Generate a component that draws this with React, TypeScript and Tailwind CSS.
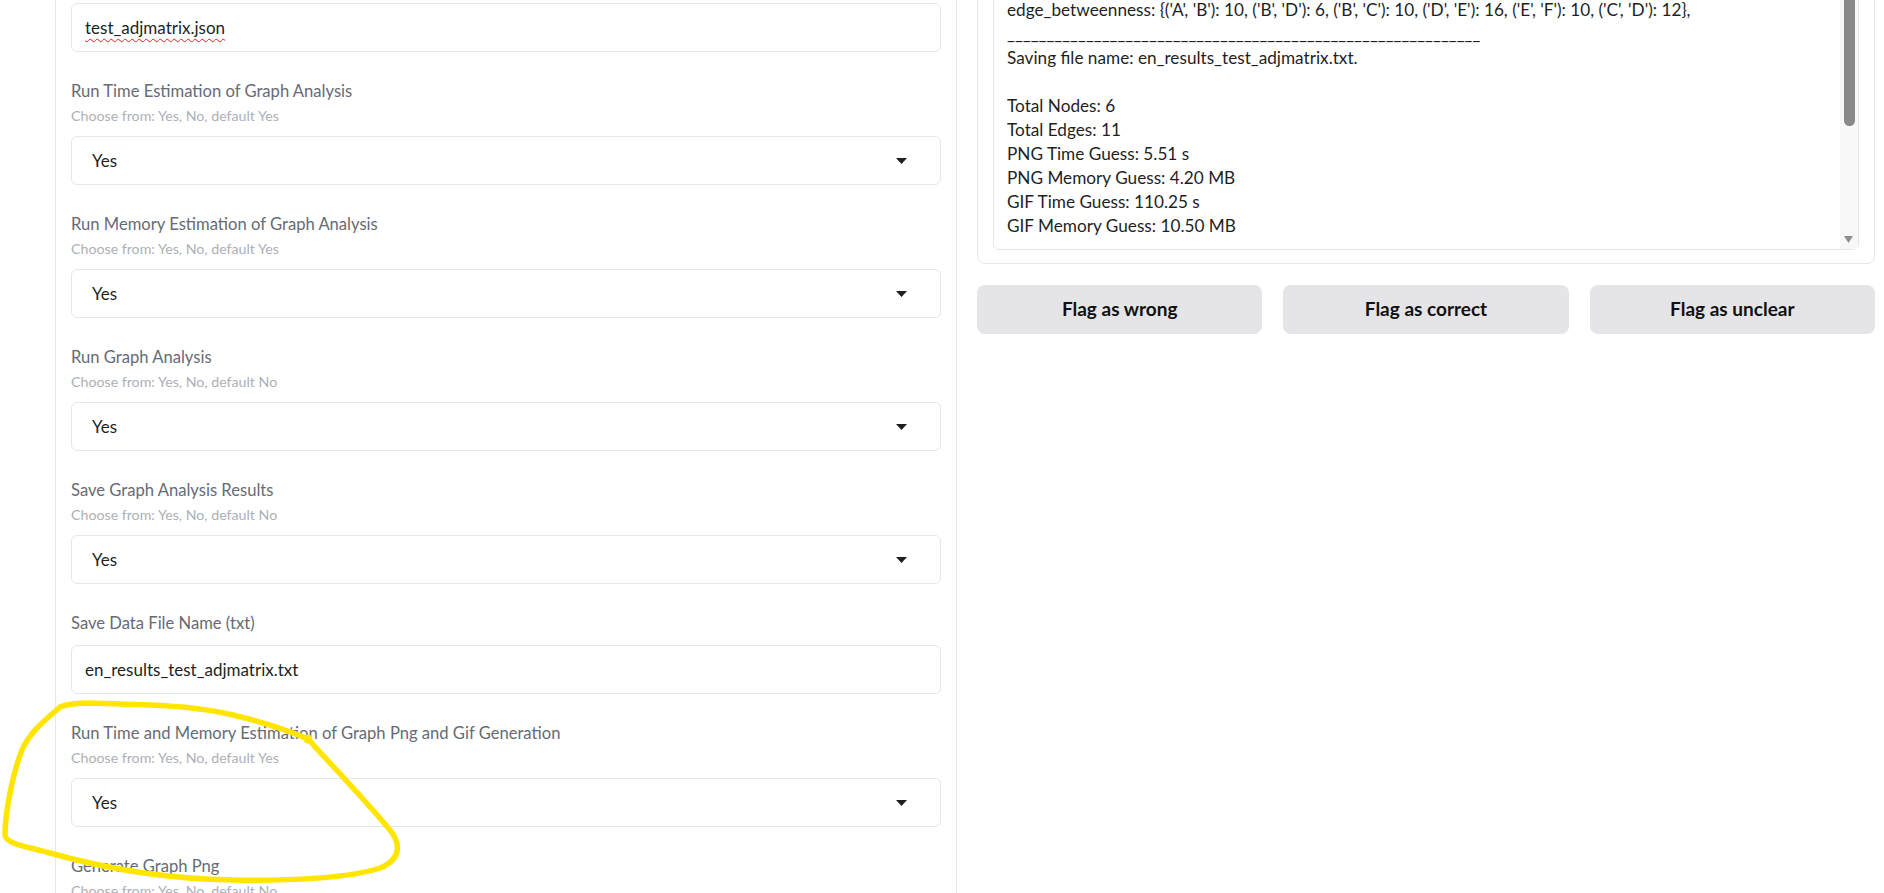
import React from 'react'

const FONT = { fontFamily: 'Lato, "Noto Sans", "Liberation Sans", sans-serif' }

type Field =
  | { kind: 'select'; label: string; hint: string; value: string }
  | { kind: 'text'; label: string; value: string }

const fields: Field[] = [
  { kind: 'select', label: 'Run Time Estimation of Graph Analysis', hint: 'Choose from: Yes, No, default Yes', value: 'Yes' },
  { kind: 'select', label: 'Run Memory Estimation of Graph Analysis', hint: 'Choose from: Yes, No, default Yes', value: 'Yes' },
  { kind: 'select', label: 'Run Graph Analysis', hint: 'Choose from: Yes, No, default No', value: 'Yes' },
  { kind: 'select', label: 'Save Graph Analysis Results', hint: 'Choose from: Yes, No, default No', value: 'Yes' },
  { kind: 'text', label: 'Save Data File Name (txt)', value: 'en_results_test_adjmatrix.txt' },
  {
    kind: 'select',
    label: 'Run Time and Memory Estimation of Graph Png and Gif Generation',
    hint: 'Choose from: Yes, No, default Yes',
    value: 'Yes',
  },
  { kind: 'select', label: 'Generate Graph Png', hint: 'Choose from: Yes, No, default No', value: 'Yes' },
]

const outputLines = [
  "edge_betweenness: {('A', 'B'): 10, ('B', 'D'): 6, ('B', 'C'): 10, ('D', 'E'): 16, ('E', 'F'): 10, ('C', 'D'): 12},",
  '____________________________________________________________',
  'Saving file name: en_results_test_adjmatrix.txt.',
  '',
  'Total Nodes: 6',
  'Total Edges: 11',
  'PNG Time Guess: 5.51 s',
  'PNG Memory Guess: 4.20 MB',
  'GIF Time Guess: 110.25 s',
  'GIF Memory Guess: 10.50 MB',
]

function Caret() {
  return (
    <svg width="11" height="6" viewBox="0 0 11 6" className="shrink-0">
      <path d="M0 0 L11 0 L5.5 6 Z" fill="#1f1f1f" />
    </svg>
  )
}

function FieldBlock({ field }: { field: Field }) {
  return (
    <div className="pt-[27px]">
      <div className="h-[24px] text-[16.6px] leading-[24px] text-[#666b75]">{field.label}</div>
      {field.kind === 'select' ? (
        <>
          <div className="mt-[3px] h-[20px] text-[14.2px] leading-[20px] text-[#adb0b6]">{field.hint}</div>
          <div className="mt-[10px] flex h-[49px] items-center justify-between rounded-md border border-[#e5e7eb] bg-white pl-[20px] pr-[33px] text-[17px] text-[#1f1f1f]">
            <span>{field.value}</span>
            <Caret />
          </div>
        </>
      ) : (
        <div className="mt-[10px] flex h-[49px] items-center rounded-md border border-[#e5e7eb] bg-white px-[13px] text-[17px] text-[#1f1f1f]">
          {field.value}
        </div>
      )}
    </div>
  )
}

function Annotation() {
  return (
    <svg className="pointer-events-none absolute left-0 top-0" width="1884" height="893" viewBox="0 0 1884 893">
      <path
        d="M60,707 Q70,703 90,703 L150,705 Q200,707 233,715 Q275,725 308,739 C325,758 365,800 390,830 C402,845 400,860 380,868 C350,878 290,881 233,880 C170,879 110,870 50,853 C25,846 6,844 5,835 C5,815 12,775 22,750 C30,732 45,720 60,707"
        fill="none"
        stroke="#ffe500"
        strokeWidth="5.5"
        strokeLinecap="round"
        strokeLinejoin="round"
      />
      <circle cx="308" cy="739" r="4.5" fill="#ffe500" />
    </svg>
  )
}

export default function App() {
  return (
    <div className="relative h-[893px] w-[1884px] overflow-hidden bg-white" style={FONT}>
      <div className="flex h-full">
        <div className="w-[55px] shrink-0" />

        {/* form panel */}
        <div className="h-full w-[902px] shrink-0 border-x border-[#e5e7eb] px-[15px]">
          <div className="mt-[3px] flex h-[49px] items-center rounded-md border border-[#e5e7eb] bg-white px-[13px] text-[17px] text-[#1f1f1f]">
            <span className="underline decoration-[#e11d1d] decoration-wavy decoration-1 underline-offset-[4px]">
              test_adjmatrix.json
            </span>
          </div>
          {fields.map((f) => (
            <FieldBlock key={f.label} field={f} />
          ))}
        </div>

        {/* output panel */}
        <div className="flex-1 pl-[20px] pr-[9px]">
          <div className="-mt-[40px] rounded-lg border border-[#e5e7eb] bg-white px-[15px] pb-[13px] pt-[15px]">
            <div className="flex rounded-md border border-[#e5e7eb] bg-white">
              <div className="flex-1 pl-[13px] pt-[21px] pb-[11px] text-[17.2px] leading-[24px] text-[#1f1f1f]">
                {outputLines.map((line, i) => (
                  <div key={i} className="h-[24px] whitespace-pre">
                    {line}
                  </div>
                ))}
              </div>
              <div className="flex w-[18px] flex-col bg-[#f8f8f8] pl-[4px] pr-[3px]">
                <div className="mt-[9px] h-[140px] rounded-full bg-[#8a8a8a]" />
                <svg width="9" height="7" viewBox="0 0 9 7" className="mb-[6px] mt-auto">
                  <path d="M0 0 L9 0 L4.5 7 Z" fill="#8f8f8f" />
                </svg>
              </div>
            </div>
          </div>

          <div className="mt-[21px] grid grid-cols-3 gap-[21px]">
            {['Flag as wrong', 'Flag as correct', 'Flag as unclear'].map((t) => (
              <button
                key={t}
                type="button"
                className="flex h-[49px] items-center justify-center rounded-lg bg-[#e5e5e8] text-[19px] font-bold text-[#111]"
              >
                {t}
              </button>
            ))}
          </div>
        </div>
      </div>

      <Annotation />
    </div>
  )
}
